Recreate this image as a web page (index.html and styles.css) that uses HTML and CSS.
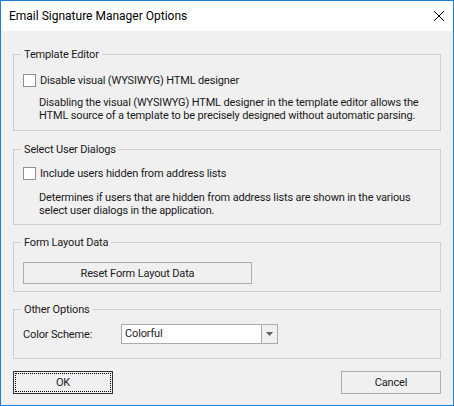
FILE: index.html
```html
<!DOCTYPE html>
<html>
<head>
<meta charset="utf-8">
<link rel="stylesheet" href="styles.css">
</head>
<body>
<div class="window">
  <div class="titlebar">
    <span class="title">Email Signature Manager Options</span>
    <svg class="close" width="10" height="10" viewBox="0 0 10 10"><path d="M0 0L10 10M10 0L0 10" stroke="#000" stroke-width="1" fill="none"/></svg>
  </div>
  <div class="content">
    <fieldset class="group g1">
      <legend>Template Editor</legend>
      <label class="check"><span class="box"></span><span>Disable visual (WYSIWYG) HTML designer</span></label>
      <p class="desc">Disabling the visual (WYSIWYG) HTML designer in the template editor allows the<br>HTML source of a template to be precisely designed without automatic parsing.</p>
    </fieldset>
    <fieldset class="group g2">
      <legend>Select User Dialogs</legend>
      <label class="check"><span class="box"></span><span>Include users hidden from address lists</span></label>
      <p class="desc">Determines if users that are hidden from address lists are shown in the various<br>select user dialogs in the application.</p>
    </fieldset>
    <fieldset class="group g3">
      <legend>Form Layout Data</legend>
      <button class="btn btn-reset">Reset Form Layout Data</button>
    </fieldset>
    <fieldset class="group g4">
      <legend>Other Options</legend>
      <div class="field">
        <span class="field-label">Color Scheme:</span>
        <div class="combo">
          <span class="combo-text">Colorful</span>
          <span class="combo-btn"><svg width="7" height="4" viewBox="0 0 7 4"><path d="M0 0H7L3.5 4Z" fill="#606060"/></svg></span>
        </div>
      </div>
    </fieldset>
    <div class="actions">
      <button class="btn btn-default">OK</button>
      <button class="btn">Cancel</button>
    </div>
  </div>
</div>
</body>
</html>
```
FILE: styles.css
```css
* { box-sizing: border-box; }
html, body { margin: 0; padding: 0; }
body {
  font-family: Roboto, "Noto Sans", "Liberation Sans", sans-serif;
  font-size: 11px;
  letter-spacing: -0.15px;
  color: #1a1a1a;
  background: #f0f0f0;
}
.window {
  width: 454px;
  height: 406px;
  border: 1px solid #1c7fd6;
  background: #f0f0f0;
  display: flex;
  flex-direction: column;
}
.titlebar {
  height: 30px;
  background: #fff;
  display: flex;
  align-items: center;
  padding-left: 8px;
}
.title {
  color: #000;
  font-size: 12px;
  letter-spacing: 0;
}
.close {
  display: block;
  margin-left: auto;
  margin-right: 9px;
  margin-top: -1px;
}
.content {
  padding: 16px 12px 0;
}
.group {
  margin: 0;
  border: 1px solid #cfcfcf;
  padding: 0 9px;
  min-inline-size: auto;
}
.group legend {
  margin-left: -2px;
  padding: 0 3px;
  height: 15px;
  line-height: 15px;
}
.check {
  display: flex;
  align-items: center;
  height: 15px;
  line-height: 15px;
}
.box {
  width: 13px;
  height: 13px;
  border: 1px solid #8f8f8f;
  background: #fff;
  margin-right: 4px;
  flex: none;
}
.desc {
  margin: 0 0 0 16px;
  line-height: 13px;
  white-space: nowrap;
}
.g1 { padding-top: 11px; padding-bottom: 8px; }
.g1 .desc { margin-top: 8px; }
.g2 { margin-top: 11px; padding-top: 9px; padding-bottom: 7px; }
.g2 .desc { margin-top: 10px; }
.g3 { margin-top: 10px; padding-top: 12px; padding-bottom: 7px; }
.g4 { margin-top: 10px; padding-top: 7px; padding-bottom: 14px; }
.btn {
  font: inherit;
  letter-spacing: inherit;
  color: #1a1a1a;
  background: #f0f0f0;
  border: 1px solid #adadad;
  padding: 0;
  margin: 0;
  display: block;
}
.btn-reset {
  width: 229px;
  height: 22px;
}
.field {
  display: flex;
  align-items: center;
}
.field-label {
  width: 98px;
  flex: none;
}
.combo {
  width: 157px;
  height: 20px;
  border: 1px solid #ababab;
  background: #fff;
  display: flex;
}
.combo-text {
  flex: 1;
  padding-left: 3px;
  line-height: 18px;
}
.combo-btn {
  width: 16px;
  border-left: 1px solid #ababab;
  background: #f0f0f0;
  display: flex;
  align-items: center;
  justify-content: center;
}
.combo-btn svg { display: block; }
.actions {
  margin-top: 12px;
  display: flex;
  justify-content: space-between;
}
.actions .btn {
  width: 100px;
  height: 23px;
}
.btn-default {
  border-color: #333;
  outline: 1px dotted #000;
  outline-offset: -3px;
}
```
